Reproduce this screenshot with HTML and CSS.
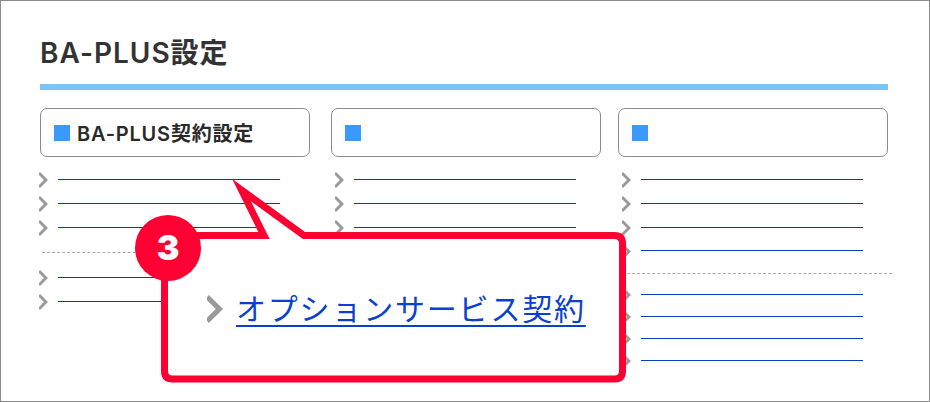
FILE: index.html
```html
<!DOCTYPE html>
<html lang="ja">

<head>
    <meta charset="UTF-8">
    <title>BA-PLUS設定</title>
    <link rel="stylesheet" href="styles.css">
</head>

<body>
    <div class="page">
        <h1 class="pageTitle">BA-PLUS設定</h1>

        <div class="columns">
            <section class="col colFirst">
                <h2 class="cardHead"><span class="mark"></span>BA-PLUS契約設定</h2>
                <ul class="links">
                    <li class="row"><span class="chev"></span><span class="line"></span></li>
                    <li class="row"><span class="chev"></span><span class="line"></span></li>
                    <li class="row"><span class="chev"></span><span class="line"></span></li>
                    <li class="sep"></li>
                    <li class="row"><span class="chev"></span><span class="line"></span></li>
                    <li class="row"><span class="chev"></span><span class="line"></span></li>
                </ul>
            </section>

            <section class="col">
                <h2 class="cardHead"><span class="mark"></span></h2>
                <ul class="links">
                    <li class="row"><span class="chev"></span><span class="line"></span></li>
                    <li class="row"><span class="chev"></span><span class="line"></span></li>
                    <li class="row"><span class="chev"></span><span class="line"></span></li>
                </ul>
            </section>

            <section class="col colLast">
                <h2 class="cardHead"><span class="mark"></span></h2>
                <ul class="links">
                    <li class="row"><span class="chev"></span><span class="line"></span></li>
                    <li class="row"><span class="chev"></span><span class="line"></span></li>
                    <li class="row"><span class="chev"></span><span class="line"></span></li>
                    <li class="row tight"><span class="chev"></span><span class="line bright"></span></li>
                    <li class="sep"></li>
                    <li class="row tight"><span class="chev"></span><span class="line bright"></span></li>
                    <li class="row tight"><span class="chev"></span><span class="line bright"></span></li>
                    <li class="row tight"><span class="chev"></span><span class="line bright"></span></li>
                    <li class="row tight"><span class="chev"></span><span class="line bright"></span></li>
                </ul>
            </section>
        </div>

        <div class="callout">
            <svg class="calloutShape" viewBox="161 172 470 215" width="470" height="215">
                <path d="M173 235.5 H264 L241.5 190 L304 235.5 H614.5 Q622.5 235.5 622.5 243.5 V371 Q622.5 379 614.5 379 H172.5 Q164.5 379 164.5 371 V244 Z"
                    fill="#fff" stroke="#ff0033" stroke-width="7" stroke-miterlimit="10" />
            </svg>
            <div class="badge">3</div>
            <div class="calloutRow">
                <span class="chev chevBig"></span>
                <a class="calloutLink" href="#">オプションサービス契約</a>
            </div>
        </div>
    </div>
</body>

</html>
```

FILE: styles.css
```css
html,
body {
    margin: 0;
    padding: 0;
}

body {
    background-color: #fff;
    font-family: "Inter", "Noto Sans CJK JP", sans-serif;
}

.page {
    position: relative;
    box-sizing: border-box;
    width: 930px;
    height: 402px;
    padding: 0 41px 0 39px;
    border: 1px solid #8c8c8c;
    overflow: hidden;
}

.pageTitle {
    margin: 0;
    height: 83px;
    box-sizing: border-box;
    padding-top: 32px;
    border-bottom: 6px solid #7fc2f5;
    height: 89px;
    font-size: 28px;
    line-height: 40px;
    font-weight: 600;
    letter-spacing: 1px;
    color: #333;
}

.columns {
    display: grid;
    grid-template-columns: 291px 287px 270px;
    margin-top: 18px;
}

.cardHead {
    display: flex;
    align-items: center;
    box-sizing: border-box;
    width: 270px;
    height: 49px;
    margin: 0;
    padding-left: 13px;
    border: 1px solid #8c8c8c;
    border-radius: 7px;
    font-size: 20px;
    font-weight: 600;
    letter-spacing: 0.8px;
    color: #2a2a2a;
}

.mark {
    width: 16px;
    height: 16px;
    margin-right: 7px;
    background-color: #3b99fc;
}

.links {
    list-style: none;
    margin: 0;
    padding: 11px 0 0 4px;
}

.colFirst .links {
    padding-left: 0;
    margin-left: -1px;
}

.row {
    display: flex;
    align-items: center;
    height: 24px;
}

.row.tight {
    height: 22px;
}

.row.tight:nth-child(4) {
    height: 23px;
}

.chev {
    flex: none;
    width: 9px;
    height: 16px;
    background-color: #999;
    clip-path: polygon(11% 0, 100% 50%, 11% 100%, 0 92%, 0 81%, 55% 50%, 0 19%, 0 8%);
}

.line {
    width: 222px;
    height: 1px;
    margin-left: 10px;
    margin-bottom: 2px;
    background-color: #0a3aa8;
}

.line.bright {
    background-color: #0a3fc8;
}

.sep {
    height: 0;
    width: 270px;
    margin: 12px 0 13px 3px;
    border-top: 1px dashed #aaa;
}

.colLast .sep {
    margin: 10px 0 10px 0;
}

.callout {
    position: absolute;
    left: 160px;
    top: 171px;
    width: 470px;
    height: 215px;
}

.calloutShape {
    position: absolute;
    left: 0;
    top: 0;
}

.badge {
    position: absolute;
    left: -26px;
    top: 43px;
    width: 66px;
    height: 66px;
    border-radius: 50%;
    background-color: #ff0033;
    color: #fff;
    font-size: 34px;
    font-weight: 900;
    line-height: 66px;
    text-align: center;
}

.calloutRow {
    position: relative;
    display: flex;
    align-items: center;
    gap: 13px;
    padding: 116px 0 0 46px;
}

.chevBig {
    width: 16px;
    height: 28px;
}

.calloutLink {
    font-size: 30px;
    line-height: 42px;
    letter-spacing: 1.8px;
    color: #0a3fd0;
    text-underline-offset: 5px;
    text-decoration-thickness: 2px;
}
```
